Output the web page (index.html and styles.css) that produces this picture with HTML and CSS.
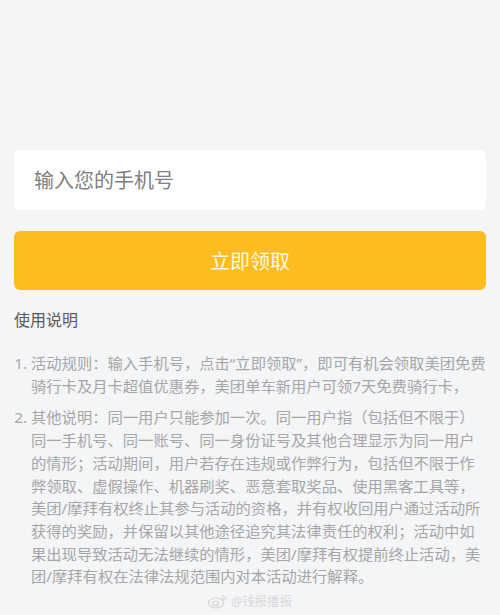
FILE: index.html
```html
<!DOCTYPE html>
<html lang="zh-CN">
<head>
    <meta charset="UTF-8">
    <meta name="viewport" content="width=device-width, initial-scale=1.0">
    <title>立即领取</title>
    <link rel="stylesheet" href="styles.css">
</head>
<body>
    <div class="container">
        <div class="form">
            <input type="tel" class="phone-input" placeholder="输入您的手机号">
            <button class="submit-btn">立即领取</button>
        </div>

        <div class="rules">
            <h3>使用说明</h3>
            <ol>
                <li>活动规则：输入手机号，点击“立即领取”，即可有机会领取美团免费骑行卡及月卡超值优惠券，美团单车新用户可领7天免费骑行卡，</li>
                <li>其他说明：同一用户只能参加一次。同一用户指（包括但不限于）同一手机号、同一账号、同一身份证号及其他合理显示为同一用户的情形；活动期间，用户若存在违规或作弊行为，包括但不限于作弊领取、虚假操作、机器刷奖、恶意套取奖品、使用黑客工具等，美团/摩拜有权终止其参与活动的资格，并有权收回用户通过活动所获得的奖励，并保留以其他途径追究其法律责任的权利；活动中如果出现导致活动无法继续的情形，美团/摩拜有权提前终止活动，美团/摩拜有权在法律法规范围内对本活动进行解释。</li>
            </ol>
        </div>

        <div class="watermark">
            <svg width="20" height="16" viewBox="0 0 20 16">
                <ellipse cx="8" cy="10" rx="7.5" ry="5" fill="none" stroke="#d6d6d8" stroke-width="1.2"/>
                <ellipse cx="7.5" cy="10.5" rx="3" ry="2.4" fill="none" stroke="#d6d6d8" stroke-width="1.2"/>
                <path d="M13 2.5 a5 5 0 0 1 5 5" fill="none" stroke="#d6d6d8" stroke-width="1.2"/>
                <path d="M13 5 a2.5 2.5 0 0 1 2.5 2.5" fill="none" stroke="#d6d6d8" stroke-width="1.2"/>
            </svg>
            <span>@钱报播报</span>
        </div>
    </div>
</body>
</html>
```

FILE: styles.css
```css
body {
    margin: 0;
    background-color: #f4f5f7;
    font-family: "Noto Sans", "Noto Sans CJK SC", sans-serif;
}
.container {
    padding: 150px 14px 0 14px;
}
.form {
    display: flex;
    flex-direction: column;
    gap: 21px;
}
.phone-input {
    height: 60px;
    border: none;
    border-radius: 6px;
    background-color: #fff;
    padding: 0 20px;
    font-family: inherit;
    font-size: 20px;
    color: #333;
    outline: none;
}
.phone-input::placeholder {
    color: #808080;
}
.submit-btn {
    height: 59px;
    border: none;
    border-radius: 6px;
    background-color: #fdbc1f;
    color: #fff7e2;
    font-family: inherit;
    font-size: 20px;
}
.rules h3 {
    margin: 18px 0 0 0;
    font-size: 16px;
    font-weight: normal;
    line-height: 24px;
    color: #5a5a5a;
}
.rules ol {
    margin: 20px 0 0 0;
    padding-left: 17px;
    color: #a6a6a8;
    font-size: 15.3px;
    line-height: 22.7px;
}
.rules li {
    margin-bottom: 9px;
}
.rules li:last-child {
    margin-bottom: 0;
}
.watermark {
    display: flex;
    align-items: center;
    justify-content: center;
    gap: 3px;
    margin-top: 3px;
    font-size: 12.5px;
    color: #d8d8da;
}
```
